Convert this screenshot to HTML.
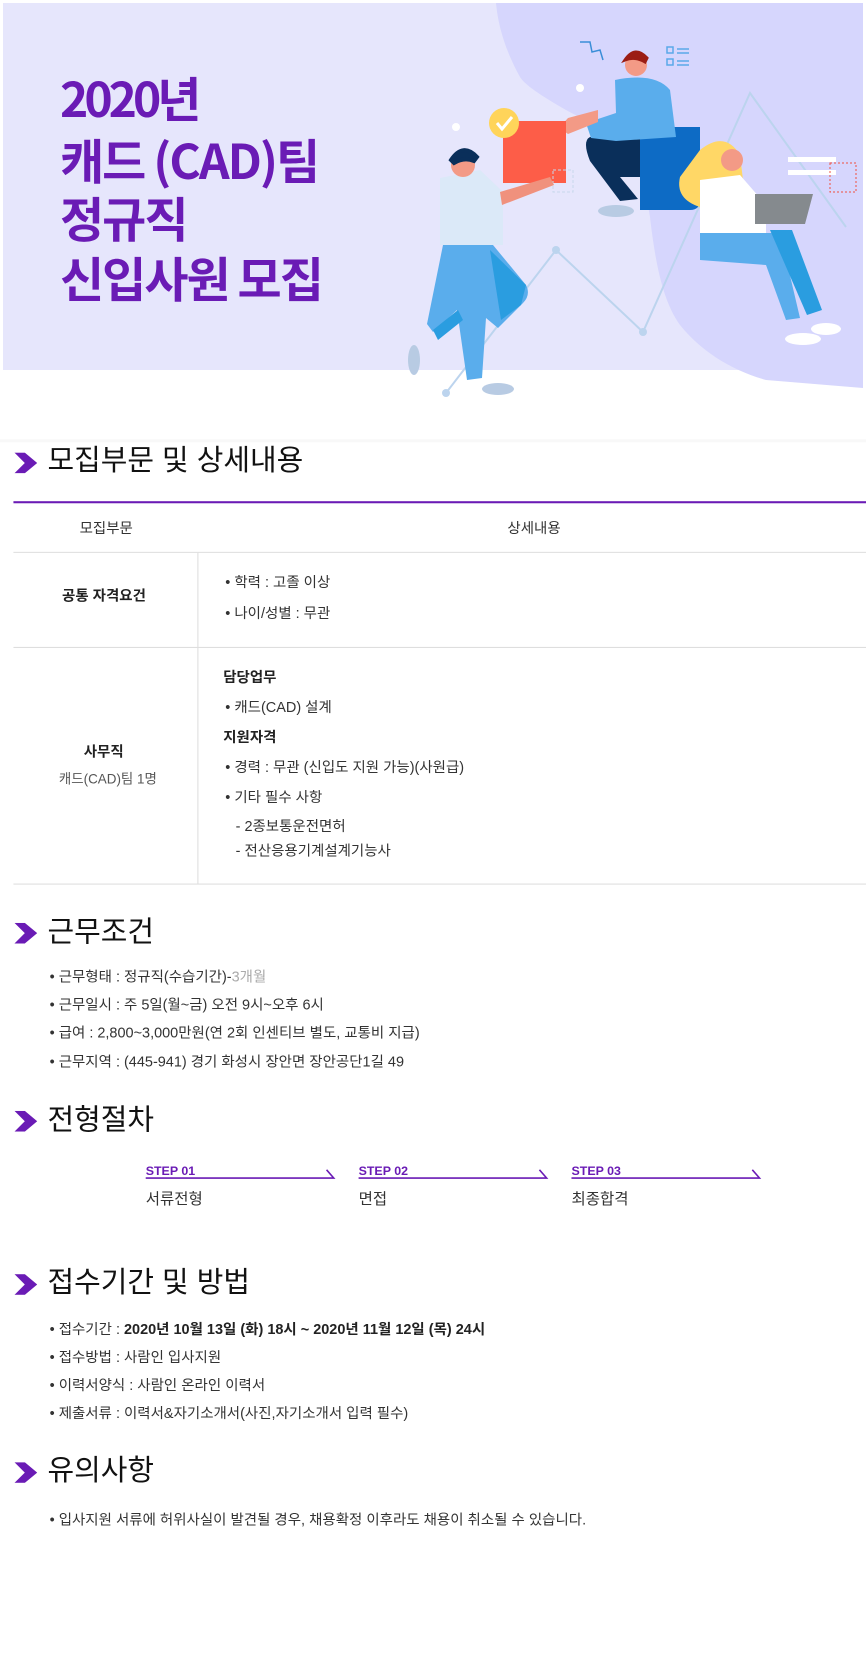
<!DOCTYPE html>
<html><head><meta charset="utf-8">
<style>
*{margin:0;padding:0;box-sizing:border-box}
body{width:866px;height:1621px;background:#fff;position:relative;overflow:hidden;font-family:"Liberation Sans","Noto Sans CJK KR",sans-serif;color:#333}
.a{position:absolute;white-space:nowrap;line-height:1}
.t{font-size:48px;font-weight:bold;color:#6a1bb5;letter-spacing:-2px;font-family:"Noto Sans CJK KR","Liberation Sans",sans-serif}
.h{font-size:28px;color:#111;left:46px}
.ch{position:absolute;left:14px;width:22px;height:20px}
.li{font-size:14px;color:#333;left:48px}
.c{font-size:14px;color:#333}
.st{font-size:12px;font-weight:bold;color:#6a1bb5}
#w{position:absolute;left:0;top:0;width:866px;height:1621px;transform:scale(1.0334);transform-origin:0 0}
</style></head><body>
<!-- banner -->
<div class="a" style="left:3px;top:3px;width:860px;height:367px;background:#e6e6fc"></div>
<svg class="a" style="left:0;top:0" width="866" height="420">
<path d="M496 3 L863 3 L863 388 L766 380 C730 370 700 350 680 325 C662 300 655 260 650 217 C645 185 640 165 633 157 C610 130 580 118 566 110 C540 95 525 85 520 77 C505 50 498 25 496 3 Z" fill="#d6d6fd"/>
<polyline points="446,393 556,250 643,332 750,93 846,227" fill="none" stroke="#bcd4ee" stroke-width="2"/>
<circle cx="556" cy="250" r="4" fill="#bcd4ee"/><circle cx="643" cy="332" r="4" fill="#bcd4ee"/><circle cx="446" cy="393" r="4" fill="#bcd4ee"/>
<polyline points="580,42 590,42 592,52 600,50 603,60" fill="none" stroke="#3a8ed8" stroke-width="1.5"/>
<g stroke="#5aa8ea" stroke-width="1.5" fill="none"><rect x="667" y="47" width="6" height="6"/><rect x="667" y="59" width="6" height="6"/><path d="M677 49h12M677 53h12M677 61h12M677 65h12"/></g>
<circle cx="580" cy="88" r="4" fill="#fff"/><circle cx="456" cy="127" r="4" fill="#fff"/>
<!-- top man -->
<path d="M640 127 l60 0 l0 73 q0 10 -10 10 l-50 0 z" fill="#0d6bc5"/>
<path d="M590 137 l50 -10 l0 50 l-20 0 l18 22 l-18 2 l-30 -40 q-8 -20 0 -24z" fill="#0a2f5a"/>
<ellipse cx="616" cy="211" rx="18" ry="6" fill="#b8cbe3"/>
<path d="M615 80 q40 -8 55 10 l6 47 l-60 4 l-25 -3 l-5 -15 l30 -10z" fill="#5aadec"/>
<path d="M568 118 l30 -8 l0 12 l-30 12 q-10 -6 0 -16z" fill="#f39a86"/>
<circle cx="636" cy="65" r="11" fill="#f39a86"/>
<path d="M625 60 q10 -15 22 -2 l-2 4 q-10 -6 -20 -2z" fill="#9b1d14" stroke="#9b1d14" stroke-width="3"/>
<!-- red box -->
<rect x="503" y="121" width="63" height="62" fill="#fd5d48"/>
<circle cx="504" cy="123" r="15" fill="#ffd45a"/>
<path d="M497 123 l5 6 l10 -12" stroke="#fff" stroke-width="3" fill="none"/>
<rect x="553" y="170" width="20" height="22" fill="none" stroke="#c8d8ec" stroke-dasharray="3,2"/>
<!-- left man -->
<path d="M443 245 l50 0 l33 40 q5 10 -3 18 l-25 25 l-12 -10 l-4 60 l-15 2 l-10 -70 l-24 22 l-6 -8 z" fill="#5aadec"/>
<path d="M490 250 l36 35 l-5 20 l-20 15 z" fill="#2a9de0"/>
<path d="M433 330 l25 -20 l5 10 l-25 20z" fill="#2a9de0"/>
<ellipse cx="498" cy="389" rx="16" ry="6" fill="#b8cbe3"/>
<ellipse cx="414" cy="360" rx="6" ry="15" fill="#b8cbe3"/>
<path d="M440 178 l40 -8 l23 22 l0 53 l-63 0z" fill="#dbe9f8"/>
<path d="M500 192 l50 -15 l4 8 l-52 20z" fill="#f0917d"/>
<circle cx="463" cy="165" r="12" fill="#f39a86"/>
<path d="M451 160 q12 -18 26 -3 l-3 4 q-10 -4 -20 2z" fill="#0a2f5a" stroke="#0a2f5a" stroke-width="4"/>
<!-- woman -->
<path d="M700 150 q25 -20 40 5 l6 50 l-46 2 q-25 -8 -20 -30z" fill="#ffd766"/>
<circle cx="732" cy="160" r="11" fill="#f39a86"/>
<path d="M700 180 l40 -5 l26 30 l0 28 l-66 0 z" fill="#fff"/>
<path d="M755 194 l58 0 l-8 30 l-50 0z" fill="#858a8e"/>
<path d="M700 233 l80 0 l20 85 l-14 2 l-20 -55 l-66 -5z" fill="#5aadec"/>
<path d="M770 230 l22 0 l30 80 l-15 5z" fill="#2a9de0"/>
<ellipse cx="803" cy="339" rx="18" ry="6" fill="#fff"/>
<ellipse cx="826" cy="329" rx="15" ry="6" fill="#fff"/>
<rect x="788" y="157" width="48" height="5" fill="#fff"/><rect x="788" y="170" width="48" height="5" fill="#fff"/>
<rect x="830" y="163" width="26" height="29" fill="none" stroke="#f05040" stroke-dasharray="2,2"/>
</svg>
<div class="a t" style="left:60px;top:72px;letter-spacing:-4px">2020년</div>
<div class="a t" style="left:60px;top:134px">캐드 (CAD)팀</div>
<div class="a t" style="left:60px;top:192px">정규직</div>
<div class="a t" style="left:60px;top:252px">신입사원 모집</div>

<div id="w">
<div class="a" style="left:0;top:425px;width:866px;height:3px;background:#f8f8f8"></div>
<svg width="0" height="0" style="position:absolute"><defs><path id="cv" d="M0 0 L10 0 L22 10 L10 20 L0 20 L10 10 Z" fill="#6a1bb5"/></defs></svg>
<svg class="ch" style="top:438px"><use href="#cv"/></svg>
<div class="a h" style="top:432px">모집부문 및 상세내용</div>

<div class="a" style="left:13px;top:485px;width:853px;height:2px;background:#6a1bb5"></div>
<div class="a c" style="left:77px;top:504px">모집부문</div>
<div class="a c" style="left:491px;top:504px">상세내용</div>
<div class="a" style="left:13px;top:534px;width:853px;height:1px;background:#ddd"></div>
<div class="a" style="left:13px;top:626px;width:853px;height:1px;background:#ddd"></div>
<div class="a" style="left:13px;top:855px;width:853px;height:1px;background:#ddd"></div>
<div class="a" style="left:191px;top:535px;width:1px;height:320px;background:#ddd"></div>
<div class="a c" style="left:60px;top:569px;font-weight:bold;color:#222">공통 자격요건</div>
<div class="a c" style="left:218px;top:556px">• 학력 : 고졸 이상</div>
<div class="a c" style="left:218px;top:586px">• 나이/성별 : 무관</div>
<div class="a c" style="left:81px;top:720px;font-weight:bold;color:#222">사무직</div>
<div class="a c" style="left:57px;top:747px;font-size:13px;color:#555">캐드(CAD)팀 1명</div>
<div class="a c" style="left:216px;top:648px;font-weight:bold;color:#222">담당업무</div>
<div class="a c" style="left:218px;top:677px">• 캐드(CAD) 설계</div>
<div class="a c" style="left:216px;top:706px;font-weight:bold;color:#222">지원자격</div>
<div class="a c" style="left:218px;top:735px">• 경력 : 무관 (신입도 지원 가능)(사원급)</div>
<div class="a c" style="left:218px;top:764px">• 기타 필수 사항</div>
<div class="a c" style="left:228px;top:792px">- 2종보통운전면허</div>
<div class="a c" style="left:228px;top:816px">- 전산응용기계설계기능사</div>

<svg class="ch" style="top:893px"><use href="#cv"/></svg>
<div class="a h" style="top:888px">근무조건</div>
<div class="a li" style="top:938px">• 근무형태 : 정규직(수습기간)-<span style="color:#aaa">3개월</span></div>
<div class="a li" style="top:965px">• 근무일시 : 주 5일(월~금) 오전 9시~오후 6시</div>
<div class="a li" style="top:992px">• 급여 : 2,800~3,000만원(연 2회 인센티브 별도, 교통비 지급)</div>
<div class="a li" style="top:1020px">• 근무지역 : (445-941) 경기 화성시 장안면 장안공단1길 49</div>

<svg class="ch" style="top:1075px"><use href="#cv"/></svg>
<div class="a h" style="top:1070px">전형절차</div>
<div class="a st" style="left:141px;top:1127px">STEP 01</div>
<div class="a st" style="left:347px;top:1127px">STEP 02</div>
<div class="a st" style="left:553px;top:1127px">STEP 03</div>
<svg class="a" style="left:0;top:1125px" width="866" height="20">
<g stroke="#6a1bb5" stroke-width="1.5" fill="none">
<polyline points="141,15 323,15 316,7"/><polyline points="347,15 529,15 522,7"/><polyline points="553,15 735,15 728,7"/>
</g></svg>
<div class="a" style="left:141px;top:1153px;font-size:15px">서류전형</div>
<div class="a" style="left:347px;top:1153px;font-size:15px">면접</div>
<div class="a" style="left:553px;top:1153px;font-size:15px">최종합격</div>

<svg class="ch" style="top:1233px"><use href="#cv"/></svg>
<div class="a h" style="top:1227px">접수기간 및 방법</div>
<div class="a li" style="top:1279px">• 접수기간 : <b style="color:#222">2020년 10월 13일 (화) 18시 ~ 2020년 11월 12일 (목) 24시</b></div>
<div class="a li" style="top:1306px">• 접수방법 : 사람인 입사지원</div>
<div class="a li" style="top:1333px">• 이력서양식 : 사람인 온라인 이력서</div>
<div class="a li" style="top:1360px">• 제출서류 : 이력서&amp;자기소개서(사진,자기소개서 입력 필수)</div>

<svg class="ch" style="top:1415px"><use href="#cv"/></svg>
<div class="a h" style="top:1409px">유의사항</div>
<div class="a li" style="top:1463px">• 입사지원 서류에 허위사실이 발견될 경우, 채용확정 이후라도 채용이 취소될 수 있습니다.</div>
</div>
</body></html>
